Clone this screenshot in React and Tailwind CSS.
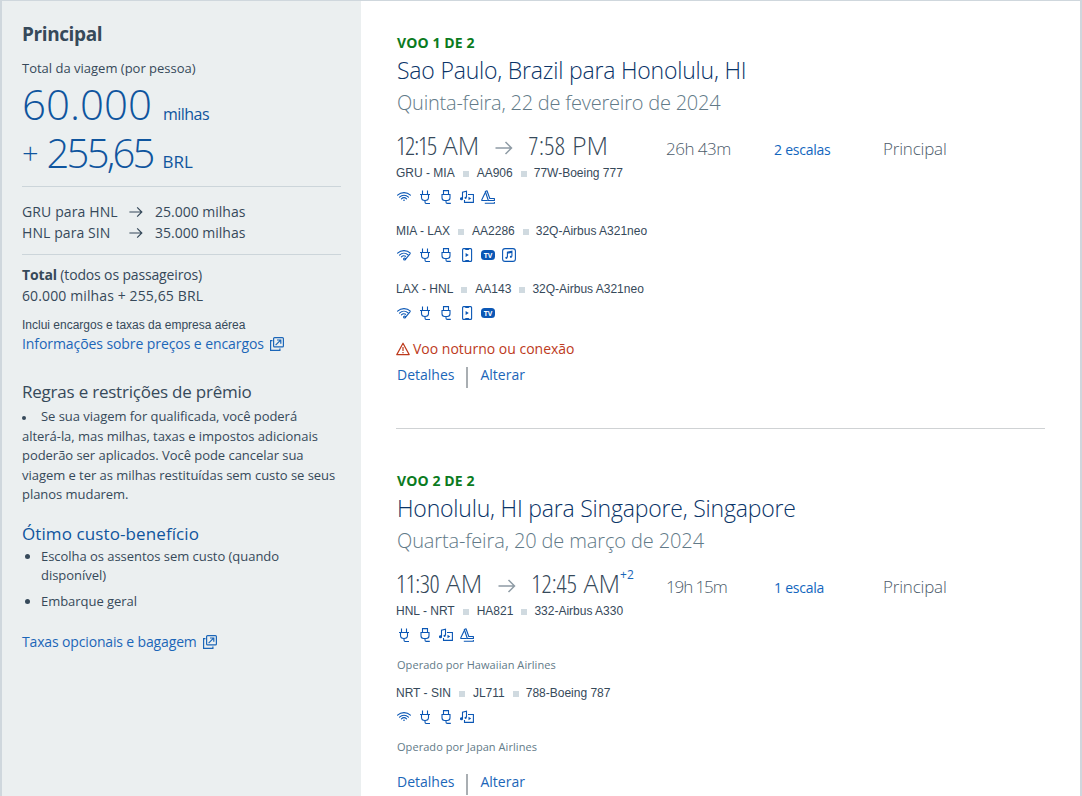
import React from 'react';

const icons = {
  wifi: (
    <g fill="none" stroke="currentColor" strokeWidth="1.1" strokeLinecap="round">
      <path d="M.6 5.2C4.2 1.7 9.8 1.7 13.4 5.2" />
      <path d="M2.5 7.1c2.6-2.4 6.4-2.4 9 0" />
      <path d="M4.4 8.9c1.5-1.4 3.7-1.4 5.2 0" />
      <circle cx="7" cy="10.3" r=".8" fill="currentColor" stroke="none" />
    </g>
  ),
  wifiFast: (
    <g fill="none" stroke="currentColor" strokeWidth="1.1" strokeLinecap="round">
      <path d="M.6 5.2C4.2 1.7 9.8 1.7 13.4 5.2" />
      <path d="M2.5 7.1c2.6-2.4 6.2-2.4 8.6-.2" />
      <path d="M4.4 8.9c1.2-1.2 2.9-1.4 4.2-.6" />
      <path d="M12.8 6.2 8.6 11.2" />
      <circle cx="7.6" cy="11" r="1" />
    </g>
  ),
  plug: (
    <g fill="none" stroke="currentColor" strokeWidth="1.1">
      <path d="M4.5.5v4M9.5.5v4M2 4.5h10M3.5 4.5v3c0 1.7 1.3 3 3.5 3s3.5-1.3 3.5-3v-3" />
      <path d="M7 10.5V12q0 1.5 1.3 1.5H12" />
    </g>
  ),
  usb: (
    <g fill="none" stroke="currentColor" strokeWidth="1.1">
      <path d="M4.5 4.4V.6h5v3.8M3 4.5h8v3.3c0 1.7-1 2.7-2.6 2.7H5.6C4 10.5 3 9.5 3 7.8z" />
      <path d="M7 10.5V12q0 1.4 1.3 1.4h3.5" />
    </g>
  ),
  media: (
    <g fill="none" stroke="currentColor" strokeWidth="1.1">
      <path d="M2.5 8.5V2.2l4-.9v6.2" />
      <circle cx="1.5" cy="8.8" r="1" fill="currentColor" />
      <path d="M8 4.5h5.4v7.9H4.5V10" />
      <path d="M8.5 6.8v3.4l2.7-1.7z" fill="currentColor" stroke="none" />
      <circle cx="5.6" cy="7.8" r="1.1" fill="currentColor" stroke="none" />
    </g>
  ),
  seat: (
    <g fill="none" stroke="currentColor" strokeWidth="1.1" strokeLinejoin="round">
      <path d="M4.3 1.5 6 .8l2.8 7.7h4.6v2H7.3z" />
      <path d="M4.3 2.5.8 9.7v.8h6" />
      <path d="M3.8 13.2h9.6V12" />
    </g>
  ),
  phone: (
    <g fill="none" stroke="currentColor" strokeWidth="1.1">
      <rect x="2.6" y=".6" width="9" height="12.8" rx="1" />
      <path d="M5.3 1.4h3.6M5.3 12.6h3.6" />
      <path d="M5.6 5v4l3.2-2z" fill="currentColor" stroke="none" />
    </g>
  ),
  tv: (
    <g>
      <rect x="0" y="2" width="14" height="10" rx="3.5" fill="currentColor" />
      <text x="7" y="9.7" textAnchor="middle" fontSize="7" fontWeight="700" fontFamily="Open Sans, sans-serif" fill="#fff">TV</text>
    </g>
  ),
  music: (
    <g fill="none" stroke="currentColor" strokeWidth="1.1">
      <rect x=".6" y=".6" width="12.8" height="12.8" rx="2.5" />
      <path d="M5.4 9.6V4.1l4.5-1v5.5M5.4 5.3l4.5-1" />
      <circle cx="4.4" cy="9.8" r="1.1" fill="currentColor" stroke="none" />
      <circle cx="8.9" cy="8.8" r="1.1" fill="currentColor" stroke="none" />
    </g>
  ),
};

const flights = [
  {
    label: 'VOO 1 DE 2',
    title: 'Sao Paulo, Brazil para Honolulu, HI',
    date: 'Quinta-feira, 22 de fevereiro de 2024',
    dateTracking: 'tracking-[-0.22px]',
    depart: { clock: '12:15', period: 'AM', fit: 'tracking-[-1.1px]' },
    arrive: { clock: '7:58', period: 'PM', fit: 'tracking-[0.4px]' },
    duration: '26h 43m',
    stops: '2 escalas',
    warning: 'Voo noturno ou conexão',
    segments: [
      { route: 'GRU - MIA', number: 'AA906', plane: '77W-Boeing 777', amenities: ['wifi', 'plug', 'usb', 'media', 'seat'] },
      { route: 'MIA - LAX', number: 'AA2286', plane: '32Q-Airbus A321neo', amenities: ['wifiFast', 'plug', 'usb', 'phone', 'tv', 'music'] },
      { route: 'LAX - HNL', number: 'AA143', plane: '32Q-Airbus A321neo', amenities: ['wifiFast', 'plug', 'usb', 'phone', 'tv'] },
    ],
  },
  {
    label: 'VOO 2 DE 2',
    title: 'Honolulu, HI para Singapore, Singapore',
    date: 'Quarta-feira, 20 de março de 2024',
    dateTracking: 'tracking-[-0.12px]',
    depart: { clock: '11:30', period: 'AM', fit: 'tracking-[-0.5px]' },
    arrive: { clock: '12:45', period: 'AM', fit: 'tracking-[0px]' },
    plusDays: '+2',
    duration: '19h 15m',
    stops: '1 escala',
    segments: [
      { route: 'HNL - NRT', number: 'HA821', plane: '332-Airbus A330', amenities: ['plug', 'usb', 'media', 'seat'], operator: 'Operado por Hawaiian Airlines' },
      { route: 'NRT - SIN', number: 'JL711', plane: '788-Boeing 787', amenities: ['wifi', 'plug', 'usb', 'media'], operator: 'Operado por Japan Airlines' },
    ],
  },
];

const Amenity = ({ name }) => (
  <svg viewBox="0 0 14 14" className="w-3.5 h-3.5 text-[#0b57b5]">{icons[name]}</svg>
);

const Arrow = ({ className }) => (
  <svg viewBox="0 0 18 14" fill="none" stroke="currentColor" strokeWidth="1.5" className={className}>
    <path d="M.5 7h16M10.5 1l6 6-6 6" />
  </svg>
);

const ExternalIcon = () => (
  <svg viewBox="0 0 14 14" fill="none" stroke="currentColor" strokeWidth="1.2" className="w-3.5 h-3.5 ml-1.5">
    <rect x="3.6" y=".6" width="9.8" height="9.3" rx="1" />
    <path d="M2.5 3.6H.6v9.8h9.3v-2M5.6 8.2l5-5M7 3h3.8v3.8" />
  </svg>
);

const Time = ({ time }) => (
  <span className="whitespace-nowrap">
    <span className={`[font-stretch:75%] ${time.fit}`}>{time.clock}</span>{' '}
    <span>{time.period}</span>
  </span>
);

const Segment = ({ segment }) => (
  <div>
    <div className="flex items-center h-4 -ml-px leading-4 font-['Liberation_Sans',sans-serif] text-[12px] text-[#36495a]">
      <span>{segment.route}</span>
      <span className="w-1.5 h-1.5 mx-2 mt-0.5 bg-[#d0dae0]" />
      <span>{segment.number}</span>
      <span className="w-1.5 h-1.5 ml-2 mr-[7px] mt-0.5 bg-[#d0dae0]" />
      <span>{segment.plane}</span>
    </div>
    <div className="flex gap-[7px] mt-[9px]">
      {segment.amenities.map(name => <Amenity key={name} name={name} />)}
    </div>
    {segment.operator && (
      <p className="mt-3.5 leading-[18px] text-[11px] tracking-[0.06px] text-[#627a88]">{segment.operator}</p>
    )}
  </div>
);

const Flight = ({ flight }) => (
  <section>
    <p className="leading-5 text-[14px] font-bold tracking-[0.1px] text-[#0b7b1e]">{flight.label}</p>
    <h2 className="mt-0.5 leading-[30px] text-[23px] font-light tracking-[-0.2px] text-[#0a3468]">{flight.title}</h2>
    <p className={`mt-1 leading-7 text-[20px] font-light text-[#627a88] ${flight.dateTracking}`}>{flight.date}</p>

    <div className="grid grid-cols-[269px_108px_109px_auto] items-baseline mt-3 h-8 leading-8 text-[17px] font-light text-[#4c5b6a]">
      <div className="flex -ml-px text-[25px] text-[#36495a]">
        <Time time={flight.depart} />
        <Arrow className="shrink-0 w-[18px] h-3.5 ml-4 mr-[15px] mt-3 text-[#8e9ba5]" />
        <Time time={flight.arrive} />
        {flight.plusDays && <sup className="-mt-1 top-0 text-[12px] leading-6 font-normal text-[#1b66b8]">{flight.plusDays}</sup>}
      </div>
      <span className={flight.plusDays ? 'tracking-[-1.1px]' : 'tracking-[-0.5px]'}>{flight.duration}</span>
      <a href="#" className="text-[14px] font-normal tracking-[-0.25px] text-[#1266be]">{flight.stops}</a>
      <span className="tracking-[-0.2px]">Principal</span>
    </div>

    <div className={flight.plusDays ? 'mt-1 space-y-[11px]' : 'mt-1 space-y-[19px]'}>
      {flight.segments.map(segment => <Segment key={segment.route} segment={segment} />)}
    </div>

    {flight.warning && (
      <div className="flex items-center mt-[19px] -mb-[10px] -ml-px h-5 text-[14px] leading-5 text-[#bd3a1c]">
        <svg viewBox="0 0 14 14" fill="none" stroke="currentColor" strokeWidth="1.2" className="w-3.5 h-3.5 mr-[3px]">
          <path d="M7 1.2.8 12.6h12.4zM7 5v4M7 10v1.3" strokeLinejoin="round" />
        </svg>
        <span>{flight.warning}</span>
      </div>
    )}

    <div className="flex mt-4 text-[14px] leading-5 text-[#1b66b8]">
      <a href="#">Detalhes</a>
      <span className="w-0.5 h-[21px] mt-0.5 ml-3 mr-3 bg-[#a9aeb2]" />
      <a href="#">Alterar</a>
    </div>
  </section>
);

const Sidebar = () => (
  <aside className="w-[361px] shrink-0 border-l-2 border-[#cfd7dd] bg-[#ebeff0] pl-5 pr-5 pt-[21px] text-[14px] text-[#36495a]">
    <h1 className="leading-6 text-[19px] font-bold tracking-[-0.4px]">Principal</h1>
    <p className="mt-3 leading-5 text-[13px]">Total da viagem (por pessoa)</p>
    <div className="mt-px text-[#0f559e] leading-[49px]">
      <p className="flex items-baseline h-[49px]">
        <span className="text-[42px] font-light">60.000</span>
        <span className="ml-[11px] text-[16px] tracking-[-0.5px]">milhas</span>
      </p>
      <p className="flex items-baseline h-[49px]">
        <span className="self-start text-[29px] font-light">+</span>
        <span className="ml-[8px] text-[40px] font-light tracking-[-2.8px]">255,65</span>
        <span className="ml-2.5 text-[17px]">BRL</span>
      </p>
    </div>

    <div className="mt-[9px] border-y border-[#ccd5da] pt-3.5 pb-[11px] leading-[21px]">
      <div className="flex items-center">
        <span className="w-[107px] tracking-[0.12px]">GRU para HNL</span>
        <Arrow className="w-3.5 h-3 mr-3" />
        <span>25.000 milhas</span>
      </div>
      <div className="flex items-center">
        <span className="w-[107px] tracking-[0.08px]">HNL para SIN</span>
        <Arrow className="w-3.5 h-3 mr-3" />
        <span>35.000 milhas</span>
      </div>
    </div>

    <div className="mt-[9px] leading-[21px]">
      <p className="tracking-[-0.15px]"><b>Total</b> (todos os passageiros)</p>
      <p className="tracking-[0.12px]">60.000 milhas + 255,65 BRL</p>
    </div>
    <p className="mt-[11px] leading-4 font-['Liberation_Sans',sans-serif] text-[12px]">Inclui encargos e taxas da empresa aérea</p>
    <a href="#" className="flex items-center mt-px leading-5 tracking-[-0.08px] text-[#1b66b8]">
      <span>Informações sobre preços e encargos</span>
      <ExternalIcon />
    </a>

    <h2 className="mt-[26px] leading-6 text-[17px] tracking-[-0.22px]">Regras e restrições de prêmio</h2>
    <p className="mt-[3px] leading-[19.5px] text-[13px] tracking-[-0.04px] whitespace-nowrap">
      <span className="inline-block w-1 h-1 mr-[15px] align-middle rounded-full bg-current" />
      Se sua viagem for qualificada, você poderá<br />
      alterá-la, mas milhas, taxas e impostos adicionais<br />
      poderão ser aplicados. Você pode cancelar sua<br />
      viagem e ter as milhas restituídas sem custo se seus<br />
      planos mudarem.
    </p>

    <h2 className="mt-[17px] leading-6 text-[17px] tracking-[0.1px] text-[#0f559e]">Ótimo custo-benefício</h2>
    <ul className="mt-px pl-[19px] list-disc leading-[19.5px] text-[13px] tracking-[-0.04px] space-y-1.5">
      <li>Escolha os assentos sem custo (quando<br />disponível)</li>
      <li>Embarque geral</li>
    </ul>
    <a href="#" className="flex items-center mt-[21px] leading-5 tracking-[-0.15px] text-[#1b66b8]">
      <span>Taxas opcionais e bagagem</span>
      <ExternalIcon />
    </a>
  </aside>
);

const App = () => (
  <div className="flex h-[796px] overflow-hidden border-t border-r-2 border-[#cfd7dd] bg-white font-['Open_Sans',sans-serif]">
    <Sidebar />
    <main className="flex-1 pl-9 pr-[35px] pt-8">
      <Flight flight={flights[0]} />
      <div className="mt-10 mb-[42px] -ml-px border-t border-[#cfd2d4]" />
      <Flight flight={flights[1]} />
    </main>
  </div>
);

export default App;
